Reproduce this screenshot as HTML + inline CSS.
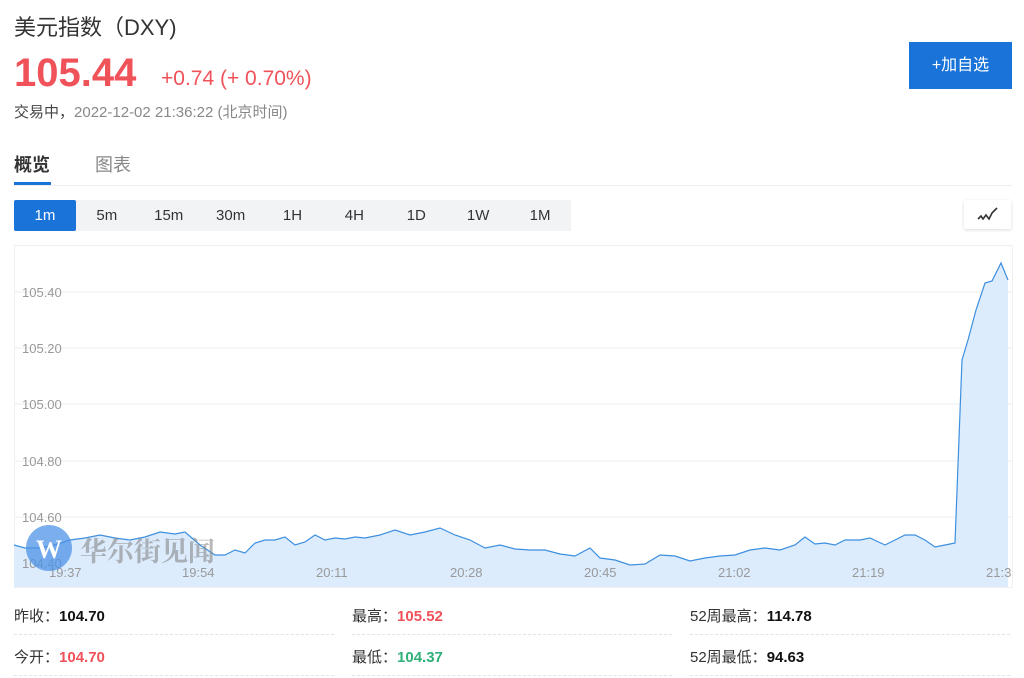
<!DOCTYPE html>
<html><head><meta charset="utf-8"><style>
*{margin:0;padding:0;box-sizing:border-box}
body{width:1024px;height:678px;background:#fff;font-family:"Liberation Sans","Noto Sans CJK SC",sans-serif;position:relative;overflow:hidden;color:#333}
.a{position:absolute;white-space:nowrap}
.tabs{position:absolute;left:14px;top:200px;width:557px;height:31px;background:#f2f3f5;display:flex}
.tabs div{width:62px;text-align:center;line-height:31px;font-size:15px;color:#333}
.tabs .on{background:#1a73d9;color:#fff;border-radius:2px}
.lbl{font-size:15px;color:#333}
.lbl b{color:#111}
.dash{position:absolute;height:0;border-top:1px dashed #e3e3e3;width:320px}
</style></head><body>
<div class="a" style="left:14px;top:10px;font-size:22px;color:#333">美元指数（DXY)</div>
<div class="a" style="left:14px;top:51px;font-size:40px;font-weight:bold;color:#f0525a">105.44</div>
<div class="a" style="left:161px;top:67px;font-size:21px;color:#f0525a">+0.74 (+ 0.70%)</div>
<div class="a" style="left:14px;top:101px;font-size:15px;color:#444">交易中，<span style="color:#888">2022-12-02 21:36:22 (北京时间)</span></div>
<div class="a" style="left:909px;top:42px;width:103px;height:47px;background:#1a73d9;color:#fff;font-size:16px;line-height:47px;text-align:center">+加自选</div>
<div class="a" style="left:14px;top:151px;font-size:18px;font-weight:bold;color:#333">概览</div>
<div class="a" style="left:95px;top:151px;font-size:18px;color:#888">图表</div>
<div class="a" style="left:14px;top:182px;width:37px;height:3px;background:#1a73d9"></div>
<div class="a" style="left:14px;top:185px;width:998px;height:1px;background:#eee"></div>
<div class="tabs"><div class="on">1m</div><div>5m</div><div>15m</div><div>30m</div><div>1H</div><div>4H</div><div>1D</div><div>1W</div><div>1M</div></div>
<div class="a" style="left:964px;top:200px;width:47px;height:29px;background:#fff;box-shadow:0 1px 3px rgba(0,0,0,.15);border-radius:2px">
<svg width="47" height="29"><path d="M14 19 L17 16 L19 19 L22 15 L25 19 L28 13 L33 8" fill="none" stroke="#333" stroke-width="1.6"/></svg></div>
<svg class="a" style="left:0;top:0" width="1024" height="600">
<rect x="14.5" y="245.5" width="998" height="342" fill="none" stroke="#f0f0f0"/>
<g stroke="#eee"><line x1="14" x2="1012" y1="292" y2="292"/><line x1="14" x2="1012" y1="348" y2="348"/><line x1="14" x2="1012" y1="404" y2="404"/><line x1="14" x2="1012" y1="461" y2="461"/><line x1="14" x2="1012" y1="517" y2="517"/></g>
<polygon fill="#dcecfd" points="14,587 14,545 25,548 40,548 55,545 70,540 85,538 100,535 115,538 130,540 145,537 160,532 175,534 185,532 200,545 215,555 225,555 235,550 245,553 255,543 265,540 275,540 285,537 295,545 305,542 315,535 325,540 335,538 345,539 355,537 365,538 380,535 395,530 410,535 425,532 440,528 455,535 470,540 485,548 500,545 515,549 530,550 545,550 560,554 575,556 590,548 600,558 615,560 630,565 645,564 660,555 675,556 690,561 705,558 720,556 735,555 750,550 765,548 780,550 795,545 805,537 815,544 825,543 835,545 845,540 860,540 870,538 885,545 895,540 905,535 915,535 925,540 935,547 950,544 955,543 962,360 968,340 976,310 985,283 992,281 1001,263 1008,280 1008,587"/>
<polyline fill="none" stroke="#3d8fdf" stroke-width="1.2" points="14,545 25,548 40,548 55,545 70,540 85,538 100,535 115,538 130,540 145,537 160,532 175,534 185,532 200,545 215,555 225,555 235,550 245,553 255,543 265,540 275,540 285,537 295,545 305,542 315,535 325,540 335,538 345,539 355,537 365,538 380,535 395,530 410,535 425,532 440,528 455,535 470,540 485,548 500,545 515,549 530,550 545,550 560,554 575,556 590,548 600,558 615,560 630,565 645,564 660,555 675,556 690,561 705,558 720,556 735,555 750,550 765,548 780,550 795,545 805,537 815,544 825,543 835,545 845,540 860,540 870,538 885,545 895,540 905,535 915,535 925,540 935,547 950,544 955,543 962,360 968,340 976,310 985,283 992,281 1001,263 1008,280"/>
<g font-size="13" fill="#999" font-family="Liberation Sans"><text x="22" y="297">105.40</text><text x="22" y="353">105.20</text><text x="22" y="409">105.00</text><text x="22" y="466">104.80</text><text x="22" y="522">104.60</text><text x="22" y="568">104.40</text>
<text x="49" y="577">19:37</text><text x="182" y="577">19:54</text><text x="316" y="577">20:11</text><text x="450" y="577">20:28</text><text x="584" y="577">20:45</text><text x="718" y="577">21:02</text><text x="852" y="577">21:19</text><text x="986" y="577">21:3</text></g>
<circle cx="49" cy="548" r="23" fill="#4f93e6" opacity=".75"/><text x="36" y="558" font-size="26" font-weight="bold" fill="#fff" font-family="Liberation Serif">W</text>
<text x="80" y="561" font-size="27" font-weight="bold" fill="#888" opacity=".6" font-family="Noto Serif CJK SC,serif">华尔街见闻</text>
</svg>
<div class="a lbl" style="left:14px;top:605px">昨收：<b>104.70</b></div>
<div class="a lbl" style="left:352px;top:605px">最高：<b style="color:#f0525a">105.52</b></div>
<div class="a lbl" style="left:690px;top:605px">52周最高：<b>114.78</b></div>
<div class="a lbl" style="left:14px;top:646px">今开：<b style="color:#f0525a">104.70</b></div>
<div class="a lbl" style="left:352px;top:646px">最低：<b style="color:#2fb079">104.37</b></div>
<div class="a lbl" style="left:690px;top:646px">52周最低：<b>94.63</b></div>
<div class="dash" style="left:14px;top:634px"></div><div class="dash" style="left:352px;top:634px"></div><div class="dash" style="left:690px;top:634px"></div>
<div class="dash" style="left:14px;top:675px"></div><div class="dash" style="left:352px;top:675px"></div><div class="dash" style="left:690px;top:675px"></div>
</body></html>
